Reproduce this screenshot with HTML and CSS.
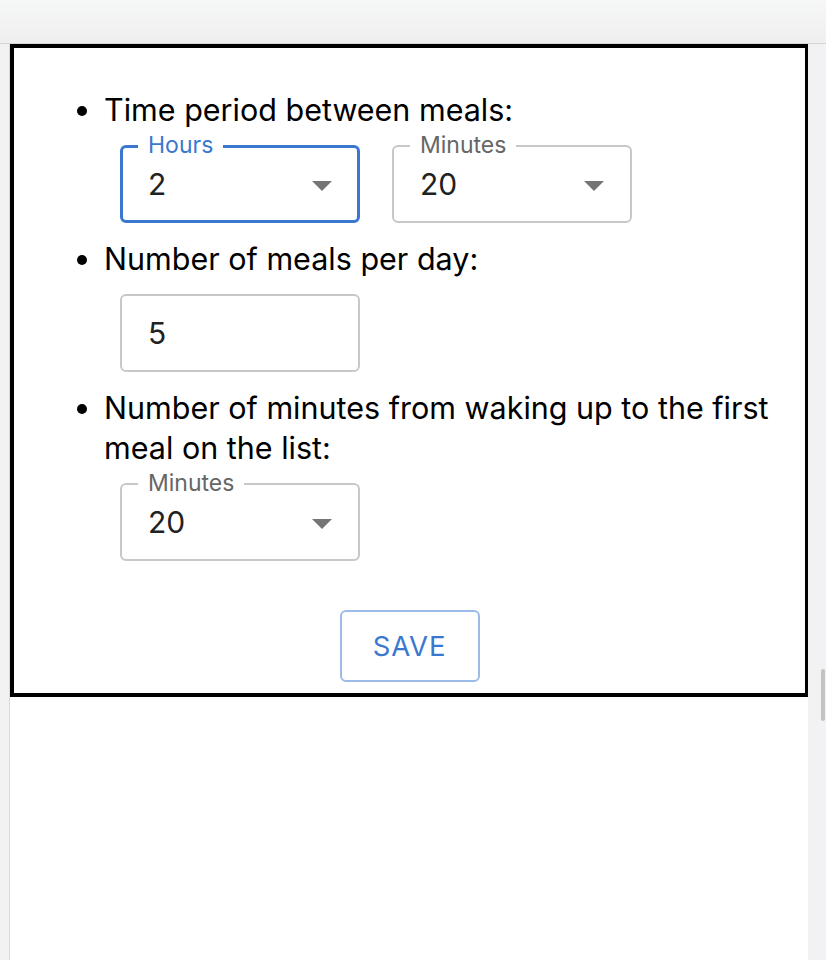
FILE: index.html
```html
<!DOCTYPE html>
<html lang="en">
<head>
<meta charset="utf-8">
<title>Meal settings</title>
<link rel="stylesheet" href="styles.css">
</head>
<body>
<div class="topbar"></div>
<div class="main">
  <div class="gutter-left"></div>
  <div class="column">
    <div class="panel">
      <ul class="settings">
        <li>
          <span class="q">Time period between meals:</span>
          <div class="fields">
            <div class="field focused">
              <span class="label">Hours</span>
              <span class="value">2</span>
              <svg class="arrow" width="20" height="10" viewBox="0 0 20 10"><polygon points="0,0 20,0 10,10"/></svg>
            </div>
            <div class="field">
              <span class="label">Minutes</span>
              <span class="value">20</span>
              <svg class="arrow" width="20" height="10" viewBox="0 0 20 10"><polygon points="0,0 20,0 10,10"/></svg>
            </div>
          </div>
        </li>
        <li>
          <span class="q">Number of meals per day:</span>
          <div class="fields">
            <div class="field">
              <span class="value">5</span>
            </div>
          </div>
        </li>
        <li>
          <span class="q">Number of minutes from waking up to the first meal on the list:</span>
          <div class="fields">
            <div class="field">
              <span class="label">Minutes</span>
              <span class="value">20</span>
              <svg class="arrow" width="20" height="10" viewBox="0 0 20 10"><polygon points="0,0 20,0 10,10"/></svg>
            </div>
          </div>
        </li>
      </ul>
      <div class="actions">
        <button class="save" type="button">SAVE</button>
      </div>
    </div>
  </div>
  <div class="gutter-right">
    <div class="thumb"></div>
  </div>
</div>
</body>
</html>
```

FILE: styles.css
```css
html, body {
  margin: 0;
  padding: 0;
}
body {
  width: 826px;
  height: 960px;
  overflow: hidden;
  background: #f2f2f3;
  font-family: Inter, "Liberation Sans", Arial, sans-serif;
  color: #000;
}
.topbar {
  height: 43px;
  background: linear-gradient(#f6f7f7, #efefef);
  border-bottom: 1px solid #d6d6d6;
}
.main {
  display: flex;
  height: 916px;
}
.gutter-left {
  width: 9px;
  background: #f2f2f2;
}
.column {
  width: 798px;
  background: #fff;
  border-left: 1px solid #dadada;
}
.gutter-right {
  width: 18px;
  background: #f2f2f4;
}
.thumb {
  width: 4px;
  height: 52px;
  margin: 625px 0 0 13px;
  background: #c3c3c3;
  border-radius: 2px;
}
.panel {
  border: 4px solid #000;
  border-right-width: 3px;
  padding: 42px 0 11px;
}
.settings {
  margin: 0;
  padding: 0 0 0 90px;
  font-size: 30.5px;
  line-height: 40px;
}
.settings li {
  padding-right: 10px;
}
.fields {
  display: flex;
  gap: 32px;
  margin: 15px 0 16px 16px;
}
.field {
  position: relative;
  box-sizing: border-box;
  width: 240px;
  height: 78px;
  border: 2px solid #c8c8c8;
  border-radius: 6px;
  display: flex;
  align-items: center;
  padding: 0 26px 0 26px;
}
.field.focused {
  border: 3px solid #3a78d0;
  padding: 0 25px 0 25px;
}
.label {
  position: absolute;
  left: 16px;
  top: -14px;
  padding: 0 10px;
  background: #fff;
  font-size: 23px;
  line-height: 24px;
  color: #666;
}
.focused .label {
  left: 15px;
  top: -15px;
  color: #3a78d0;
}
.value {
  flex: 1;
  font-size: 30px;
  line-height: 40px;
  color: #212121;
}
.arrow {
  display: block;
  fill: #757575;
  margin-top: 4px;
}
.actions {
  display: flex;
  justify-content: center;
  margin-top: 49px;
}
.save {
  box-sizing: border-box;
  width: 140px;
  height: 72px;
  margin-left: 0;
  background: #fff;
  border: 2px solid #9dbbe8;
  border-radius: 6px;
  color: #3a78d0;
  font-family: Inter, "Liberation Sans", Arial, sans-serif;
  font-size: 27.5px;
  letter-spacing: 0.8px;
  padding: 0;
}
```
